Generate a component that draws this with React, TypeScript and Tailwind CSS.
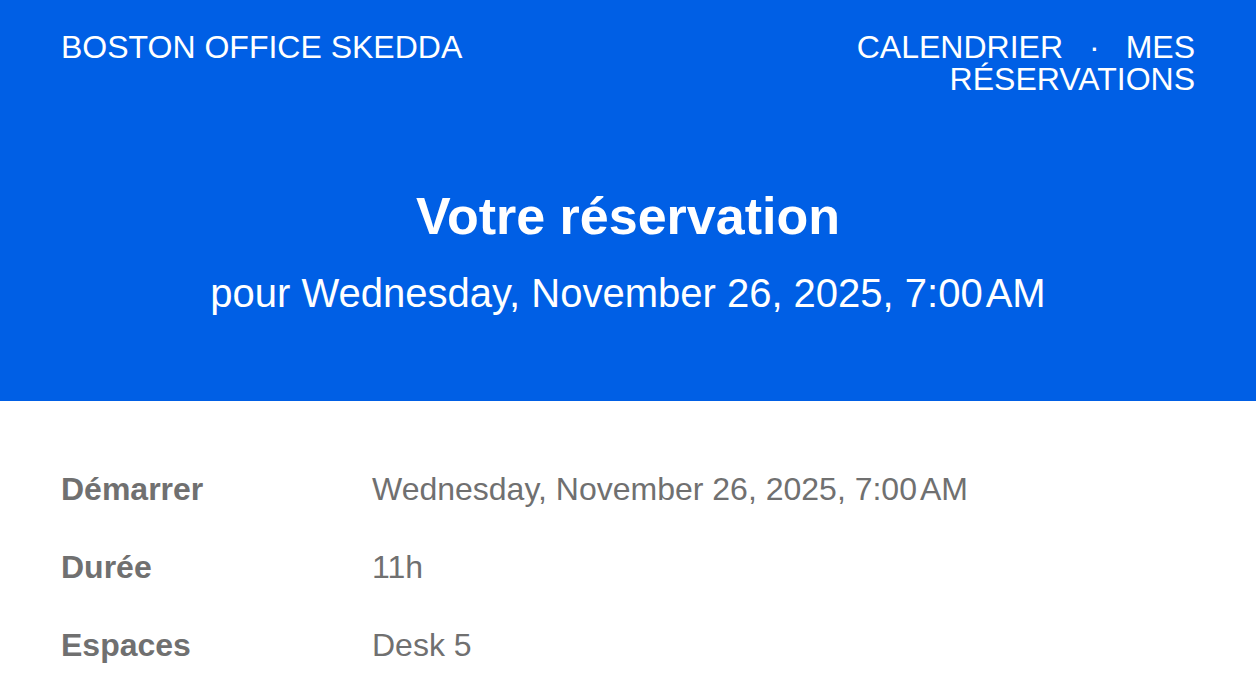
import React from 'react';

const details = [
  { label: 'Démarrer', value: 'Wednesday, November 26, 2025, 7:00', suffix: 'AM' },
  { label: 'Durée', value: '11h' },
  { label: 'Espaces', value: 'Desk 5' },
];

export default function App() {
  return (
    <div className="min-h-screen bg-white" style={{ fontFamily: '"Liberation Sans", Arial, sans-serif' }}>
      {/* Banner */}
      <div className="bg-[#005fe5] px-[61px] pt-[31px] pb-[84px] text-white">
        <div className="flex items-start justify-between">
          <div className="text-[32px] leading-[32px]">BOSTON OFFICE SKEDDA</div>
          <nav className="w-[360px] text-right text-[32px] leading-[32px]">
            <a>CALENDRIER</a>
            <span className="mx-[26px]">·</span>
            <a>MES RÉSERVATIONS</a>
          </nav>
        </div>
        <h1 className="mt-[91px] text-center text-[52px] font-bold leading-[60px]">Votre réservation</h1>
        <p className="mt-[23px] text-center text-[40px] leading-[48px]">
          pour Wednesday, November 26, 2025, 7:00<span className="ml-[3px]">AM</span>
        </p>
      </div>

      {/* Details */}
      <div className="mt-[68px] flex flex-col gap-[38px] px-[61px] text-[32px] leading-[40px] text-[#707070]">
        {details.map((d) => (
          <div key={d.label} className="flex">
            <div className="w-[311px] shrink-0 font-bold">{d.label}</div>
            <div>
              {d.value}
              {d.suffix && <span className="ml-[3px]">{d.suffix}</span>}
            </div>
          </div>
        ))}
      </div>
    </div>
  );
}
